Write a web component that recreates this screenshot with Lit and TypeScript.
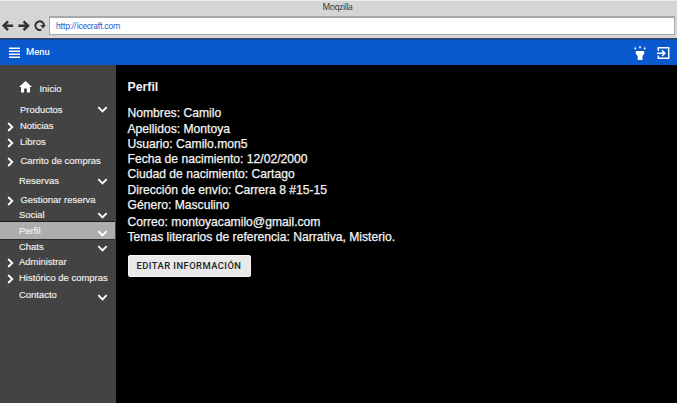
import { LitElement, html, svg, css, nothing } from "lit";
import { customElement } from "lit/decorators.js";
import { classMap } from "lit/directives/class-map.js";

interface MenuEntry {
  label: string;
  /** distance to the start of the next entry */
  pitch: number;
  indent: number;
  home?: boolean;
  arrow?: boolean;
  /** present when the entry expands; vertical shift of its chevron */
  expand?: number;
  active?: boolean;
}

const MENU: MenuEntry[] = [
  { label: "Inicio", pitch: 21, indent: 39.5, home: true },
  { label: "Productos", pitch: 16, indent: 20, expand: -1.5 },
  { label: "Noticias", pitch: 16, indent: 20, arrow: true },
  { label: "Libros", pitch: 19, indent: 20, arrow: true },
  { label: "Carrito de compras", pitch: 20, indent: 20.5, arrow: true },
  { label: "Reservas", pitch: 19, indent: 19, expand: -0.5 },
  { label: "Gestionar reserva", pitch: 15, indent: 20.5, arrow: true },
  { label: "Social", pitch: 15, indent: 19, expand: -0.5 },
  { label: "Perfil", pitch: 17, indent: 19, expand: 2.5, active: true },
  { label: "Chats", pitch: 15, indent: 19, expand: 1 },
  { label: "Administrar", pitch: 16, indent: 19, arrow: true },
  { label: "Histórico de compras", pitch: 17, indent: 19, arrow: true },
  { label: "Contacto", pitch: 16, indent: 19, expand: 2 },
];

const PROFILE: [string, string, number][] = [
  ["Nombres", "Camilo", 16],
  ["Apellidos", "Montoya", 15],
  ["Usuario", "Camilo.mon5", 15],
  ["Fecha de nacimiento", "12/02/2000", 15],
  ["Ciudad de nacimiento", "Cartago", 16],
  ["Dirección de envío", "Carrera 8 #15-15", 15],
  ["Género", "Masculino", 17],
  ["Correo", "montoyacamilo@gmail.com", 15],
  ["Temas literarios de referencia", "Narrativa, Misterio.", 16],
];

@customElement("browser-bar")
export class BrowserBar extends LitElement {
  static styles = css`
    :host { display: block; height: 39px; background: #d5d5d5; box-sizing: border-box;
      border-top: 1px solid #ececec; border-bottom: 1px solid #45474a; }
    .title { height: 15px; text-align: center; color: #333;
      font: 8.6px/13px "Open Sans", "Noto Sans", sans-serif; letter-spacing: -0.45px; padding-right: 2px; }
    .row { display: flex; align-items: center; height: 19px; padding: 0 2px; }
    .nav { display: block; width: 46px; height: 20px; flex: none; }
    .url { flex: 1; box-sizing: border-box; height: 19px; margin-left: 1px; background: #fff;
      border: 1px solid #a8a8a8; border-top-width: 2px; padding-left: 6px; color: #1f62d6;
      font: 8.500px/16px Roboto, sans-serif; letter-spacing: -0.350px; }
  `;
  render() {
    return html`
      <div class="title">Moqzilla</div>
      <div class="row">
        <svg class="nav" viewBox="0 0 46 20" fill="none" stroke="#333" stroke-width="2.5">
          <path d="M11.2 9.700H2.200M6 5.300L1.600 9.700L6 14.100" />
          <path d="M16.400 9.700H25.400M21.600 5.300L26 9.700L21.600 14.100" />
          <path d="M39.400 13.600A4.300 4.300 0 1 1 42 9.500" stroke-width="2" />
          <path d="M38.200 8.900H43.800L41 12.500Z" fill="#333" stroke="none" />
        </svg>
        <div class="url">http://icecraft.com</div>
      </div>
    `;
  }
}

@customElement("app-toolbar")
export class AppToolbar extends LitElement {
  static styles = css`
    :host { display: flex; align-items: center; height: 26px; background: #0a58ce; color: #f4f7fd;
      border-top: 1px solid #0b479f;
      padding: 0 6px 0 9px; box-sizing: border-box; font: 500 9.4px/24px Roboto, sans-serif; }
    .burger { width: 11px; height: 26px; margin-right: 6px; }
    .label { flex: 1; margin-top: -1px; }
    .actions { width: 40px; height: 26px; }
  `;
  render() {
    return html`
      <svg class="burger" viewBox="0 0 11 26" fill="#fff">
        <path d="M0 7.500h11v1.500H0zM0 10.500h11v1.500H0zM0 13.500h11v1.500H0zM0 16.500h11v1.500H0z" />
      </svg>
      <span class="label">Menu</span>
      <svg class="actions" viewBox="0 0 40 26">
        <path d="M4.800 11h8.400v2.700l-1.700 2.400v3.900H6.700v-3.900l-1.900-2.400z" fill="#fff" />
        <path d="M9 6.200v2M3.600 7.600l1.400 1.400M14.400 7.600l-1.400 1.400" stroke="#fff" stroke-width="1.600" />
        <g fill="none" stroke="#fff" stroke-width="1.500">
          <path d="M27.300 11V7.700H37.700V18.300H27.300V15.500" />
          <path d="M26 13.200H33.500M31 10.400L33.800 13.200L31 16" />
        </g>
      </svg>
    `;
  }
}

const chevronDown = svg`<path d="M1.300 1.200L5.500 5.400L9.700 1.200" />`;
const chevronRight = svg`<path d="M1.200 1L5.200 5L1.200 9" />`;

@customElement("side-menu")
export class SideMenu extends LitElement {
  static styles = css`
    :host { display: block; width: 115.500px; flex: none; box-sizing: border-box; padding-top: 16px;
      background: #434343; color: #f1f1f1; font: 9.450px/16px "Liberation Sans", Arial, sans-serif;
      -webkit-text-stroke: 0.150px #f1f1f1; }
    .entry { display: grid; grid-template-columns: auto 1fr 18.500px; align-items: start; white-space: nowrap; }
    .entry.active { background: #adadad; box-shadow: 0 -1px #1c1c1c, 0 1px #2a2a2a; margin-right: 0.500px; }
    .lead { display: flex; align-items: center; height: 16px; box-sizing: border-box; }
    .lead.home { padding-left: 19px; }
    .lead.arrow { padding-left: 6.500px; }
    .label { height: 16px; }
    .active .label { padding-top: 1px; }
    .icon { display: block; fill: none; stroke: #fff; stroke-width: 1.900; }
    .right { width: 7px; height: 10px; margin-top: 1px; }
    .down { width: 11px; height: 7px; margin-top: 5px; position: relative; }
    .house { width: 13px; height: 12px; fill: #fff; stroke: none; margin-top: -4px; }
  `;
  render() {
    return MENU.map(
      (m) => html`
        <div class=${classMap({ entry: true, active: !!m.active })} style="height:${m.pitch}px">
          <span
            class=${classMap({ lead: true, home: !!m.home, arrow: !!m.arrow })}
            style="width:${m.indent}px"
          >
            ${m.arrow ? html`<svg class="icon right" viewBox="0 0 7 10">${chevronRight}</svg>` : nothing}
            ${m.home
              ? html`<svg class="icon house" viewBox="0 0 13 12">
                  <path d="M6.500 0L13 6H11V11.500H7.900V7.600H5.100V11.500H2V6H0Z" />
                </svg>`
              : nothing}
          </span>
          <span class="label">${m.label}</span>
          ${m.expand !== undefined
            ? html`<svg class="icon down" viewBox="0 0 11 7" style="top:${m.expand}px">${chevronDown}</svg>`
            : nothing}
        </div>
      `
    );
  }
}

@customElement("profile-view")
export class ProfileView extends LitElement {
  static styles = css`
    :host { display: block; flex: 1; background: #000; color: #f4f4f4; padding: 15px 0 0 12px;
      font: 12.130px/15px "Liberation Sans", Arial, sans-serif; white-space: nowrap;
      -webkit-text-stroke: 0.250px #f4f4f4; }
    .heading { margin: 0 0 11px; font-size: 12.300px; line-height: 15px; font-weight: 700;
      -webkit-text-stroke: 0; }
    .edit { display: block; box-sizing: border-box; width: 123px; height: 22px; margin-top: 9px; padding: 0;
      border: 1px solid #f6f6f6; border-radius: 2px; background: #e9e9e9; color: #222;
      font: 500 9.400px/20px Roboto, sans-serif; letter-spacing: 0.450px; -webkit-text-stroke: 0; }
  `;
  render() {
    return html`
      <h1 class="heading">Perfil</h1>
      ${PROFILE.map(([k, v, pitch]) => html`<div style="height:${pitch}px">${k}: ${v}</div>`)}
      <button class="edit">EDITAR INFORMACIÓN</button>
    `;
  }
}

@customElement("app-root")
export class AppRoot extends LitElement {
  static styles = css`
    :host { display: flex; flex-direction: column; width: 677px; height: 403px; overflow: hidden; background: #000; }
    .body { display: flex; flex: 1; min-height: 0; }
  `;
  render() {
    return html`
      <browser-bar></browser-bar>
      <app-toolbar></app-toolbar>
      <div class="body">
        <side-menu></side-menu>
        <profile-view></profile-view>
      </div>
    `;
  }
}
